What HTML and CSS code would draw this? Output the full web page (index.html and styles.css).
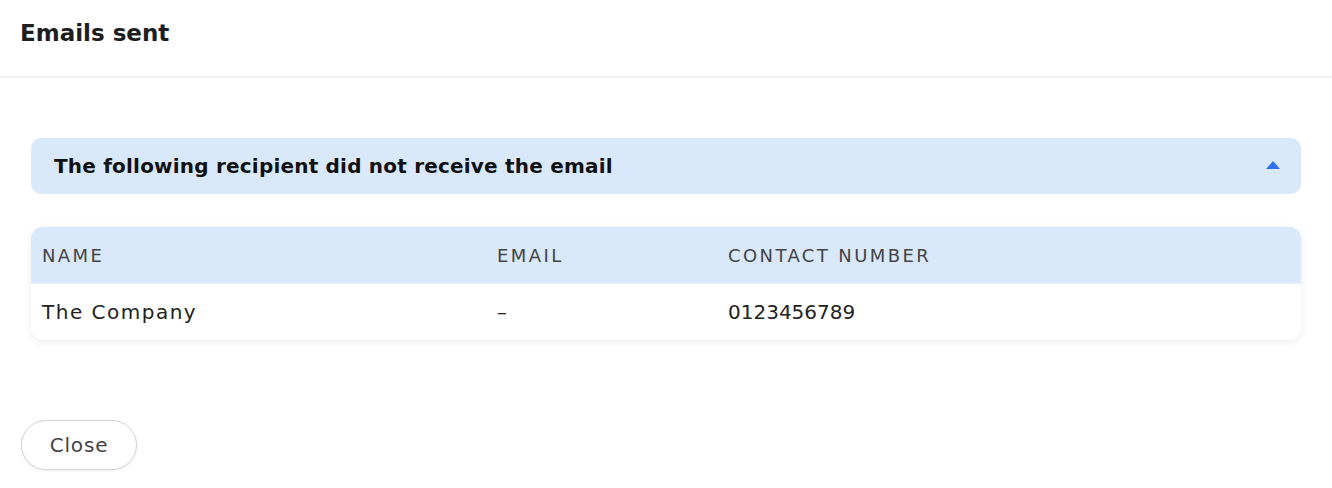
FILE: index.html
```html
<!DOCTYPE html>
<html>
<head>
<meta charset="utf-8">
<link rel="stylesheet" href="styles.css">
</head>
<body>
<div class="modal">
  <header class="modal-header">
    <h1 class="title">Emails sent</h1>
  </header>
  <main class="modal-body">
    <div class="accordion">
      <span class="accordion-title">The following recipient did not receive the email</span>
      <svg class="caret" width="14" height="8" viewBox="0 0 14 8"><path d="M7 0 L14 8 L0 8 Z" fill="#2f6ff0"/></svg>
    </div>
    <div class="table">
      <div class="row head">
        <div class="cell c1">NAME</div>
        <div class="cell c2">EMAIL</div>
        <div class="cell c3">CONTACT NUMBER</div>
      </div>
      <div class="row">
        <div class="cell c1 text-wide">The Company</div>
        <div class="cell c2">–</div>
        <div class="cell c3">0123456789</div>
      </div>
    </div>
  </main>
  <footer class="modal-footer">
    <button class="btn">Close</button>
  </footer>
</div>
</body>
</html>
```
FILE: styles.css
```css
* { box-sizing: border-box; }
html, body { margin: 0; padding: 0; background: #fff; }
body { font-family: "DejaVu Sans", sans-serif; color: #1f1f1f; }
.modal { width: 1332px; height: 488px; display: flex; flex-direction: column; }
.modal-header { height: 78px; border-bottom: 2px solid #f1f1f1; padding: 0 20px; display: flex; align-items: flex-start; }
.title { margin: 19px 0 0; font-size: 23px; font-weight: 700; line-height: 28px; color: #1e1e1e; }
.modal-body { padding: 60px 31px 0; display: flex; flex-direction: column; gap: 33px; }
.accordion { height: 56px; background: #d9e8fb; border-radius: 10px; display: flex; align-items: center; justify-content: space-between; padding: 0 21px 0 23px; }
.accordion-title { font-size: 20px; font-weight: 700; color: #111; letter-spacing: 0.2px; }
.caret { margin-top: -3px; }
.table { border-radius: 12px; box-shadow: 0 2px 10px rgba(0,0,0,0.08); overflow: hidden; background: #fff; }
.row { display: flex; height: 56px; align-items: center; font-size: 20px; color: #222; }
.row.head { height: 57px; background: #d9e8fb; font-size: 18px; color: #444; letter-spacing: 2.4px; border-bottom: 1px solid #e6eef8; }
.cell { padding-left: 11px; }
.text-wide { letter-spacing: 1.5px; }
.c1 { width: 455px; }
.c2 { width: 231px; }
.c3 { flex: 1; }
.modal-footer { margin-top: auto; padding: 0 0 18px 21px; }
.btn { width: 116px; height: 50px; border: 1px solid #d4d4d4; border-radius: 25px; background: #fff; font-family: inherit; font-size: 20px; color: #444; letter-spacing: 0.8px; box-shadow: 0 1px 3px rgba(0,0,0,0.06); }
```
